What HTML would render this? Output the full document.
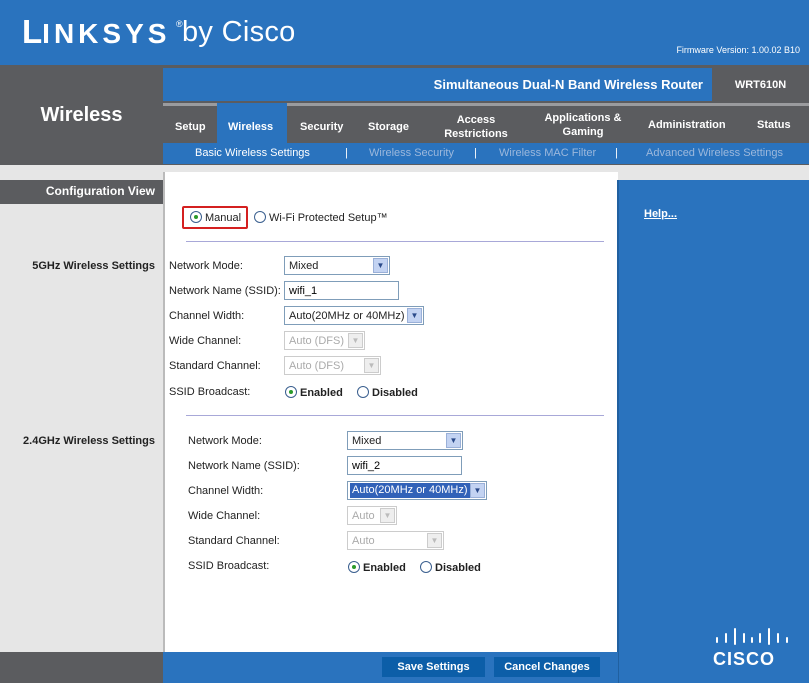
<!DOCTYPE html>
<html><head><meta charset="utf-8"><style>
*{margin:0;padding:0;box-sizing:border-box}
body{width:809px;height:683px;position:relative;overflow:hidden;font-family:"Liberation Sans",Arial,sans-serif;background:#e6e6e6}
.a{position:absolute}
.t{font-size:11px;color:#222;position:absolute}
.sel{position:absolute;height:19px;border:1px solid #7f9db9;background:#fff;font-size:11px;padding:0 4px;line-height:18px;color:#222}
.sel b{position:absolute;right:1px;top:1px;width:15px;height:15px;background:#c3d3f2;border:1px solid #9ab0d8;font-size:8px;text-align:center;line-height:13px;color:#2a4a8a}
.dis{border-color:#ccc;color:#aaa}
.dis b{background:#eee;border-color:#ccc;color:#bbb}
.inp{position:absolute;height:19px;border:1px solid #7f9db9;background:#fff;font-size:11px;padding:0 4px;line-height:18px}
.r{display:inline-block;width:12px;height:12px;border:1px solid #3a5f8f;border-radius:50%;vertical-align:-2px;margin-right:3px;background:#fff;position:relative}
.r.on::after{content:"";position:absolute;left:3px;top:3px;width:4px;height:4px;border-radius:50%;background:#2a9a2a}
.rb{position:absolute;font-size:11px;font-weight:bold;color:#222}
.sect{position:absolute;right:654px;font-size:11px;font-weight:bold;color:#222;text-align:right}
.tab{position:absolute;color:#fff;font-size:11px;font-weight:bold}
</style></head><body>
<div class="a" style="left:0;top:0;width:809px;height:65px;background:#2a73be"></div>
<div class="a" style="left:22px;top:15px;color:#fff;font-weight:bold;white-space:nowrap;height:34px">
<span class="a" style="left:0;top:0;font-size:33px;line-height:34px">L<span style="font-size:28px;letter-spacing:4px">INKSYS</span></span>
<span class="a" style="left:154px;top:4px;font-size:9px;font-weight:normal;line-height:10px">®</span>
<span class="a" style="left:160px;top:0;font-weight:normal;font-size:29px;line-height:34px;letter-spacing:0.3px">by Cisco</span></div>
<div class="a" style="right:9px;top:45px;color:#fff;font-size:9px">Firmware Version: 1.00.02 B10</div>
<div class="a" style="left:0;top:65px;width:809px;height:100px;background:#5b5c5f"></div>
<div class="a" style="left:0;top:104px;width:163px;text-align:center;color:#fff;font-size:20px;font-weight:bold">Wireless</div>
<div class="a" style="left:163px;top:68px;width:549px;height:33px;background:#2a73be"></div>
<div class="a" style="left:163px;top:77px;width:540px;text-align:right;color:#fff;font-size:13px;font-weight:bold">Simultaneous Dual-N Band Wireless Router</div>
<div class="a" style="left:712px;top:79px;width:97px;text-align:center;color:#fff;font-size:11px;font-weight:bold">WRT610N</div>
<div class="a" style="left:163px;top:103px;width:646px;height:3px;background:#9a9b9e"></div>
<div class="a" style="left:217px;top:103px;width:70px;height:42px;background:#2a73be"></div>
<div class="a" style="left:163px;top:143px;width:646px;height:21px;background:#2a73be"></div>
<div class="tab" style="top:121px;left:175px">Setup</div>
<div class="tab" style="top:121px;left:228px">Wireless</div>
<div class="tab" style="top:121px;left:300px">Security</div>
<div class="tab" style="top:121px;left:368px">Storage</div>
<div class="tab" style="top:113px;left:440px;width:72px;text-align:center;line-height:14px">Access<br>Restrictions</div>
<div class="tab" style="top:111px;left:540px;width:86px;text-align:center;line-height:14px">Applications &amp;<br>Gaming</div>
<div class="tab" style="top:119px;left:648px">Administration</div>
<div class="tab" style="top:119px;left:757px">Status</div>
<div class="a" style="top:147px;left:195px;color:#fff;font-size:11px">Basic Wireless Settings</div>
<div class="a" style="top:147px;left:345px;color:#fff;font-size:11px">|</div>
<div class="a" style="top:147px;left:369px;color:#9cb8dc;font-size:11px">Wireless Security</div>
<div class="a" style="top:147px;left:474px;color:#fff;font-size:11px">|</div>
<div class="a" style="top:147px;left:499px;color:#9cb8dc;font-size:11px">Wireless MAC Filter</div>
<div class="a" style="top:147px;left:615px;color:#fff;font-size:11px">|</div>
<div class="a" style="top:147px;left:646px;color:#9cb8dc;font-size:11px">Advanced Wireless Settings</div>
<div class="a" style="left:0;top:180px;width:163px;height:24px;background:#5b5c5f"></div>
<div class="a" style="left:0;top:184px;width:155px;text-align:right;color:#fff;font-size:12px;font-weight:bold">Configuration View</div>
<div class="a" style="left:0;top:652px;width:163px;height:31px;background:#5b5c5f"></div>
<div class="a" style="left:163px;top:172px;width:455px;height:480px;background:#fff;border-left:2px solid #bbb"></div>
<div class="a" style="left:617px;top:180px;width:192px;height:503px;background:#2a73be;border-left:2px solid #2060a0"></div>
<div class="a" style="left:163px;top:652px;width:455px;height:31px;background:#2a73be"></div>
<div class="a" style="left:644px;top:208px;color:#fff;font-size:11px;font-weight:bold;text-decoration:underline">Help...</div>
<svg class="a" style="left:714px;top:628px" width="76" height="18" viewBox="0 0 76 18">
<g stroke="#fff" stroke-width="2" stroke-linecap="round">
<line x1="3" y1="10" x2="3" y2="14"/><line x1="12" y1="6" x2="12" y2="14"/><line x1="21" y1="1" x2="21" y2="16"/><line x1="30" y1="6" x2="30" y2="14"/><line x1="38" y1="10" x2="38" y2="14"/><line x1="46" y1="6" x2="46" y2="14"/><line x1="55" y1="1" x2="55" y2="16"/><line x1="64" y1="6" x2="64" y2="14"/><line x1="73" y1="10" x2="73" y2="14"/></g></svg>
<div class="a" style="left:713px;top:649px;width:62px;text-align:center;color:#fff;font-size:18px;font-weight:bold;letter-spacing:1px">CISCO</div>
<div class="a" style="left:382px;top:657px;width:103px;height:20px;background:#0c5ea8;color:#fff;font-size:11px;font-weight:bold;text-align:center;line-height:20px">Save Settings</div>
<div class="a" style="left:494px;top:657px;width:106px;height:20px;background:#0c5ea8;color:#fff;font-size:11px;font-weight:bold;text-align:center;line-height:20px">Cancel Changes</div>

<div class="a" style="left:182px;top:206px;width:66px;height:23px;border:2px solid #d42020;border-radius:2px"></div>
<div class="a" style="left:190px;top:211px;font-size:11px;color:#222"><span class="r on"></span>Manual</div>
<div class="a" style="left:254px;top:211px;font-size:11px;color:#222"><span class="r"></span>Wi-Fi Protected Setup™</div>
<div class="a" style="left:186px;top:241px;width:418px;height:1px;background:#a8a8d8"></div>
<div class="a" style="left:186px;top:415px;width:418px;height:1px;background:#a8a8d8"></div>

<div class="sect" style="top:260px">5GHz Wireless Settings</div>
<div class="sect" style="top:435px">2.4GHz Wireless Settings</div>

<div class="t" style="left:169px;top:260px">Network Mode:</div>
<div class="sel" style="left:284px;top:256px;width:106px">Mixed<b>▼</b></div>
<div class="t" style="left:169px;top:285px">Network Name (SSID):</div>
<div class="inp" style="left:284px;top:281px;width:115px">wifi_1</div>
<div class="t" style="left:169px;top:310px">Channel Width:</div>
<div class="sel" style="left:284px;top:306px;width:140px">Auto(20MHz or 40MHz)<b>▼</b></div>
<div class="t" style="left:169px;top:335px">Wide Channel:</div>
<div class="sel dis" style="left:284px;top:331px;width:81px">Auto (DFS)<b>▼</b></div>
<div class="t" style="left:169px;top:360px">Standard Channel:</div>
<div class="sel dis" style="left:284px;top:356px;width:97px">Auto (DFS)<b>▼</b></div>
<div class="t" style="left:169px;top:386px">SSID Broadcast:</div>
<div class="rb" style="left:285px;top:386px"><span class="r on"></span>Enabled</div>
<div class="rb" style="left:357px;top:386px"><span class="r"></span>Disabled</div>

<div class="t" style="left:188px;top:435px">Network Mode:</div>
<div class="sel" style="left:347px;top:431px;width:116px">Mixed<b>▼</b></div>
<div class="t" style="left:188px;top:460px">Network Name (SSID):</div>
<div class="inp" style="left:347px;top:456px;width:115px">wifi_2</div>
<div class="t" style="left:188px;top:485px">Channel Width:</div>
<div class="sel" style="left:347px;top:481px;width:140px;padding:1px 2px;line-height:15px"><span style="background:#3162b8;color:#fff;padding:0 2px;display:inline-block">Auto(20MHz or 40MHz)</span><b>▼</b></div>
<div class="t" style="left:188px;top:510px">Wide Channel:</div>
<div class="sel dis" style="left:347px;top:506px;width:50px">Auto<b>▼</b></div>
<div class="t" style="left:188px;top:535px">Standard Channel:</div>
<div class="sel dis" style="left:347px;top:531px;width:97px">Auto<b>▼</b></div>
<div class="t" style="left:188px;top:560px">SSID Broadcast:</div>
<div class="rb" style="left:348px;top:561px"><span class="r on"></span>Enabled</div>
<div class="rb" style="left:420px;top:561px"><span class="r"></span>Disabled</div>
</body></html>
